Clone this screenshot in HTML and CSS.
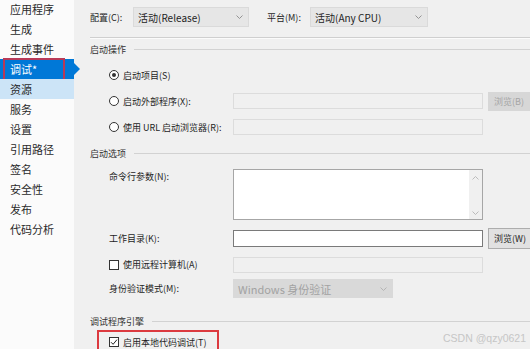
FILE: index.html
```html
<!DOCTYPE html>
<html lang="zh-CN">
<head>
    <meta charset="UTF-8">
    <meta name="viewport" content="width=device-width, initial-scale=1.0">
    <title>调试</title>
    <link rel="stylesheet" href="styles.css">
</head>
<body>
    <div class="window">
        <nav class="sidebar">
            <div class="nav-item">应用程序</div>
            <div class="nav-item">生成</div>
            <div class="nav-item">生成事件</div>
            <div class="nav-item active">调试*</div>
            <div class="nav-item hover">资源</div>
            <div class="nav-item">服务</div>
            <div class="nav-item">设置</div>
            <div class="nav-item">引用路径</div>
            <div class="nav-item">签名</div>
            <div class="nav-item">安全性</div>
            <div class="nav-item">发布</div>
            <div class="nav-item">代码分析</div>
        </nav>

        <main class="page">
            <div class="topbar">
                <span class="top-label">配置(C):</span>
                <div class="select config">
                    <span>活动(Release)</span>
                    <svg class="chevron" width="7" height="4" viewBox="0 0 7 4"><path d="M0.5 0.5 L3.5 3.5 L6.5 0.5" fill="none" stroke="#8a8a8a" stroke-width="0.9"/></svg>
                </div>
                <span class="top-label platform-label">平台(M):</span>
                <div class="select platform">
                    <span>活动(Any CPU)</span>
                    <svg class="chevron" width="7" height="4" viewBox="0 0 7 4"><path d="M0.5 0.5 L3.5 3.5 L6.5 0.5" fill="none" stroke="#8a8a8a" stroke-width="0.9"/></svg>
                </div>
            </div>

            <div class="separator"></div>

            <div class="section-title launch">启动操作</div>

            <div class="row radio-row">
                <span class="radio checked"></span>
                <span class="option-text">启动项目(S)</span>
            </div>
            <div class="row radio-row">
                <span class="radio"></span>
                <span class="option-text radio-label">启动外部程序(X):</span>
                <div class="field disabled"></div>
                <div class="button disabled">浏览(B)</div>
            </div>
            <div class="row radio-row">
                <span class="radio"></span>
                <span class="option-text radio-label">使用 URL 启动浏览器(R):</span>
                <div class="field disabled"></div>
            </div>

            <div class="section-title">启动选项</div>

            <div class="row args-row">
                <span class="field-label">命令行参数(N):</span>
                <div class="textarea">
                    <div class="scrollbar">
                        <svg width="7" height="4" viewBox="0 0 7 4"><path d="M0.5 3.5 L3.5 0.5 L6.5 3.5" fill="none" stroke="#b4b4b4" stroke-width="0.9"/></svg>
                        <svg width="7" height="4" viewBox="0 0 7 4"><path d="M0.5 0.5 L3.5 3.5 L6.5 0.5" fill="none" stroke="#b4b4b4" stroke-width="0.9"/></svg>
                    </div>
                </div>
            </div>
            <div class="row workdir-row">
                <span class="field-label">工作目录(K):</span>
                <div class="field"></div>
                <div class="button">浏览(W)</div>
            </div>
            <div class="row remote-row">
                <span class="checkbox"></span>
                <span class="option-text check-label">使用远程计算机(A)</span>
                <div class="field disabled"></div>
            </div>
            <div class="row auth-row">
                <span class="field-label">身份验证模式(M):</span>
                <div class="select auth disabled">
                    <span>Windows 身份验证</span>
                    <svg class="chevron" width="7" height="4" viewBox="0 0 7 4"><path d="M0.5 0.5 L3.5 3.5 L6.5 0.5" fill="none" stroke="#b0b0b0" stroke-width="0.9"/></svg>
                </div>
            </div>

            <div class="section-title engine">调试程序引擎</div>

            <div class="highlight">
                <span class="checkbox">
                    <svg width="8" height="8" viewBox="0 0 8 8"><path d="M1 4.2 L3.1 6.3 L7 1.6" fill="none" stroke="#222" stroke-width="1"/></svg>
                </span>
                <span class="option-text">启用本地代码调试(T)</span>
            </div>
        </main>

        <div class="watermark">CSDN @qzy0621</div>
    </div>
</body>
</html>
```

FILE: styles.css
```css
:root {
    --page-bg: #f0f0f0;
    --accent: #0078d7;
    --text: #1e1e1e;
    --line: #d2d2d2;
}

* {
    margin: 0;
    padding: 0;
    box-sizing: border-box;
}

body {
    font-family: "Noto Sans CJK SC", "Noto Sans", sans-serif;
    background: var(--page-bg);
    color: var(--text);
    width: 530px;
    height: 349px;
    overflow: hidden;
}

.window {
    position: relative;
    display: flex;
    height: 349px;
}

/* left navigation */
.sidebar {
    width: 74px;
    flex-shrink: 0;
    background: #fbfbfb;
    margin-top: -1px;
}

.nav-item {
    position: relative;
    height: 20px;
    line-height: 20px;
    padding-left: 10px;
    font-size: 11px;
    color: #2a2a2a;
    white-space: nowrap;
}

.nav-item.active {
    background: var(--accent);
    color: white;
}

.nav-item.active::before {
    content: "";
    position: absolute;
    left: 3px;
    top: -1px;
    width: 58px;
    height: 21px;
    border: 2px solid #b83a58;
}

.nav-item.active::after {
    content: "";
    position: absolute;
    right: -6px;
    top: 4px;
    border-left: 6px solid var(--accent);
    border-top: 6px solid transparent;
    border-bottom: 6px solid transparent;
}

.nav-item.hover {
    background: #cce4f7;
}

/* main page */
.page {
    flex: 1;
    padding-left: 16px;
    font-size: 9px;
    min-width: 0;
}

.topbar {
    display: flex;
    align-items: center;
    height: 20px;
    margin-top: 7px;
}

.top-label {
    width: 43px;
    flex-shrink: 0;
}

.platform-label {
    margin-left: 18px;
}

.select {
    display: flex;
    align-items: center;
    justify-content: space-between;
    height: 20px;
    padding: 0 5px 0 4px;
    background: #e6e6e6;
    border: 1px solid #dadada;
    font-size: 10px;
    flex-shrink: 0;
}

.select.config {
    width: 116px;
}

.select.platform {
    width: 118px;
}

.select.auth {
    width: 160px;
    height: 19px;
    font-size: 11px;
}

.select.disabled {
    background: #d9d9d9;
    border-color: #d9d9d9;
    color: #a2a2a2;
}

.separator {
    height: 2px;
    margin-top: 10px;
    border-top: 1px solid #cfcfcf;
    border-bottom: 1px solid #fbfbfb;
}

.section-title {
    display: flex;
    align-items: center;
    height: 20px;
    margin-top: 6px;
    color: #333;
}

.section-title::after {
    content: "";
    flex: 1;
    height: 1px;
    margin-left: 8px;
    background: var(--line);
}

.section-title.launch {
    margin-top: 0;
}

.section-title.engine {
    margin-top: 13px;
}

.row {
    display: flex;
    align-items: center;
    padding-left: 19px;
    margin-top: 6px;
}

.radio-row {
    height: 20px;
}

.radio {
    width: 10px;
    height: 10px;
    border: 1px solid #333;
    border-radius: 50%;
    background: white;
    flex-shrink: 0;
    display: flex;
    align-items: center;
    justify-content: center;
}

.radio.checked::after {
    content: "";
    width: 4px;
    height: 4px;
    border-radius: 50%;
    background: #333;
}

.checkbox {
    width: 10px;
    height: 10px;
    border: 1px solid #333;
    background: white;
    flex-shrink: 0;
    display: flex;
    align-items: center;
    justify-content: center;
}

.option-text {
    flex-shrink: 0;
    margin-left: 4px;
    white-space: nowrap;
}

.radio-label,
.check-label {
    width: 110px;
}

.field-label {
    width: 124px;
    flex-shrink: 0;
    white-space: nowrap;
}

.field {
    width: 250px;
    height: 17px;
    flex-shrink: 0;
    background: white;
    border: 1px solid #7a7a7a;
}

.field.disabled {
    height: 16px;
    background: #f0f0f0;
    border-color: #dcdcdc;
}

.button {
    flex-shrink: 0;
    width: 50px;
    height: 21px;
    margin-left: 5px;
    padding-left: 5px;
    line-height: 19px;
    background: #e1e1e1;
    border: 1px solid #adadad;
    white-space: nowrap;
}

.button.disabled {
    height: 19px;
    line-height: 17px;
    background: #d7d7d7;
    border-color: #d7d7d7;
    color: #a5a5a5;
}

.args-row {
    align-items: flex-start;
    line-height: 16px;
}

.textarea {
    display: flex;
    justify-content: flex-end;
    flex-shrink: 0;
    width: 250px;
    height: 51px;
    background: white;
    border: 1px solid #a6a6a6;
}

.scrollbar {
    display: flex;
    flex-direction: column;
    justify-content: space-between;
    align-items: center;
    width: 13px;
    padding: 6px 0 4px;
    background: #f0f0f0;
}

.workdir-row {
    height: 21px;
    margin-top: 8px;
}

.remote-row {
    height: 17px;
    margin-top: 7px;
}

.auth-row {
    height: 19px;
    margin-top: 6px;
}

.highlight {
    display: flex;
    align-items: center;
    width: 122px;
    height: 22px;
    margin-left: 7px;
    margin-top: -1px;
    padding: 0 0 0 10px;
    border: 2px solid #dc3a3f;
    border-bottom: none;
}

.watermark {
    position: absolute;
    right: 4px;
    bottom: 5px;
    font-family: "Liberation Sans", sans-serif;
    font-size: 10.5px;
    color: #c6c6c6;
}
```
